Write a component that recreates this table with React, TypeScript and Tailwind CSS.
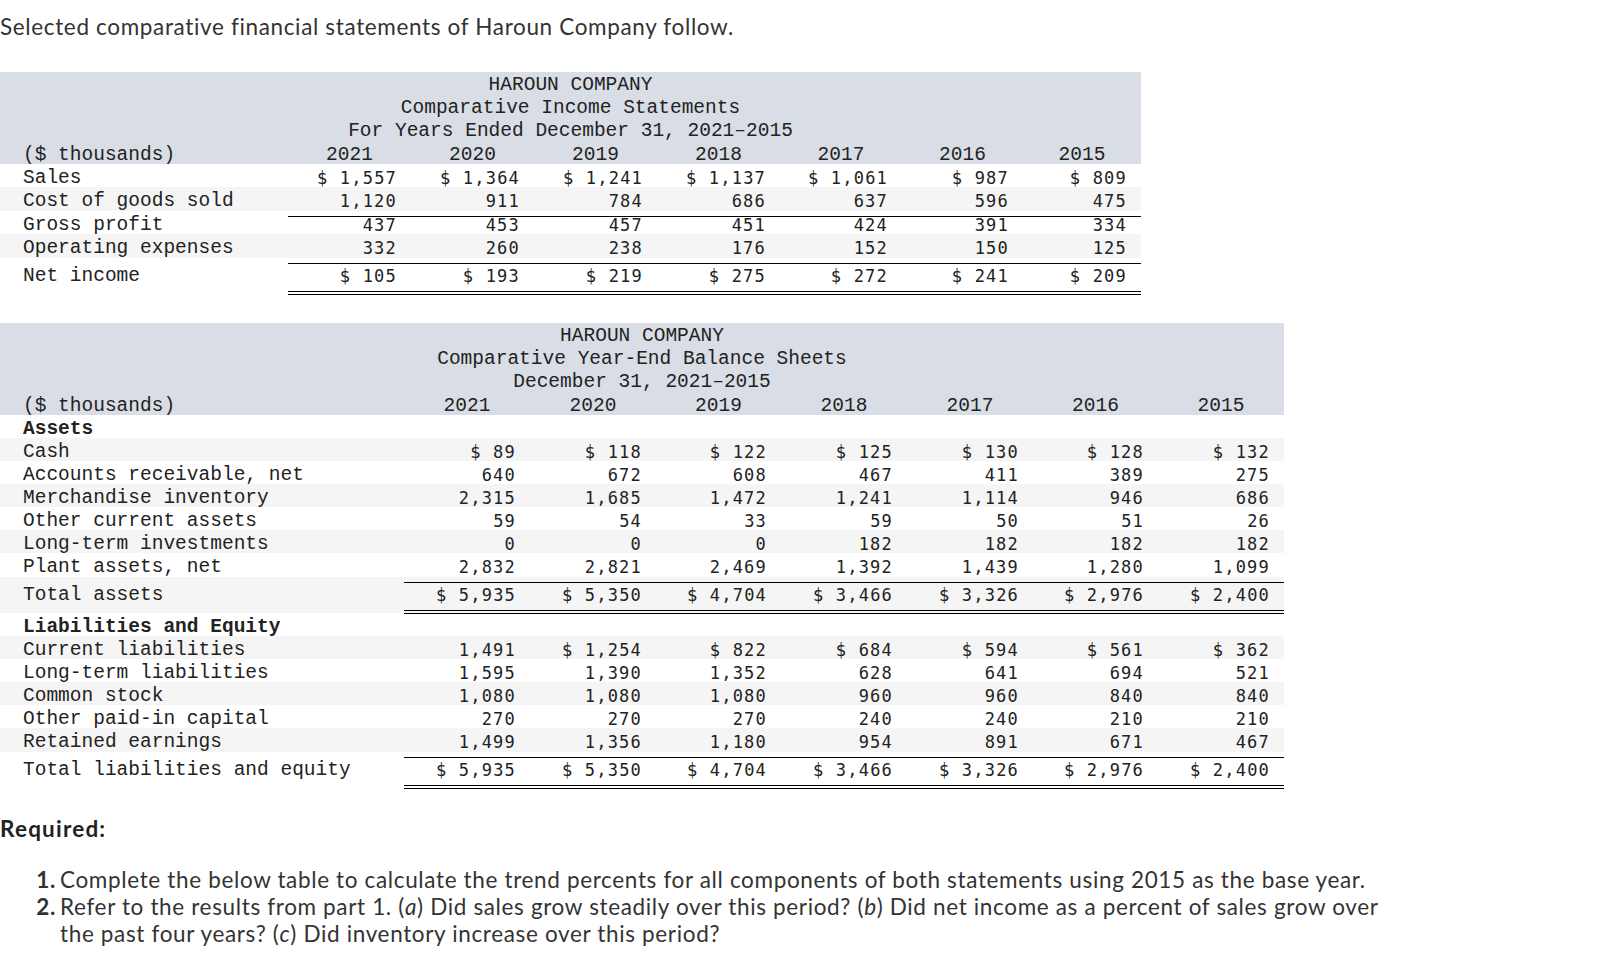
import clsx from "clsx";

const INCOME_GRID =
  "grid grid-cols-[288px_123px_123px_123px_123px_122px_121px_118px]";
const BALANCE_GRID =
  "grid grid-cols-[404px_126px_126px_125px_126px_126px_125px_126px]";

// serif mono where the box has one, Liberation Mono keeps Courier widths otherwise
const labelFont =
  "font-['Courier_New','Nimbus_Mono_PS','FreeMono','Liberation_Mono',monospace] text-[19.5px] text-[#222]";
const numFont =
  "font-['DejaVu_Sans_Mono',monospace] text-[17px] tracking-[1.2px] text-[#222]";

const YEARS = ["2021", "2020", "2019", "2018", "2017", "2016", "2015"];

type Rule = "none" | "single" | "double";

type RowData = {
  label: string;
  values?: string[];
  rule?: Rule;
  bold?: boolean;
};

const incomeRows: RowData[] = [
  { label: "Sales", values: ["$ 1,557", "$ 1,364", "$ 1,241", "$ 1,137", "$ 1,061", "$ 987", "$ 809"] },
  { label: "Cost of goods sold", values: ["1,120", "911", "784", "686", "637", "596", "475"], rule: "single" },
  { label: "Gross profit", values: ["437", "453", "457", "451", "424", "391", "334"] },
  { label: "Operating expenses", values: ["332", "260", "238", "176", "152", "150", "125"], rule: "single" },
  { label: "Net income", values: ["$ 105", "$ 193", "$ 219", "$ 275", "$ 272", "$ 241", "$ 209"], rule: "double" },
];

const balanceRows: RowData[] = [
  { label: "Assets", bold: true },
  { label: "Cash", values: ["$ 89", "$ 118", "$ 122", "$ 125", "$ 130", "$ 128", "$ 132"] },
  { label: "Accounts receivable, net", values: ["640", "672", "608", "467", "411", "389", "275"] },
  { label: "Merchandise inventory", values: ["2,315", "1,685", "1,472", "1,241", "1,114", "946", "686"] },
  { label: "Other current assets", values: ["59", "54", "33", "59", "50", "51", "26"] },
  { label: "Long-term investments", values: ["0", "0", "0", "182", "182", "182", "182"] },
  { label: "Plant assets, net", values: ["2,832", "2,821", "2,469", "1,392", "1,439", "1,280", "1,099"], rule: "single" },
  { label: "Total assets", values: ["$ 5,935", "$ 5,350", "$ 4,704", "$ 3,466", "$ 3,326", "$ 2,976", "$ 2,400"], rule: "double" },
  { label: "Liabilities and Equity", bold: true },
  { label: "Current liabilities", values: ["1,491", "$ 1,254", "$ 822", "$ 684", "$ 594", "$ 561", "$ 362"] },
  { label: "Long-term liabilities", values: ["1,595", "1,390", "1,352", "628", "641", "694", "521"] },
  { label: "Common stock", values: ["1,080", "1,080", "1,080", "960", "960", "840", "840"] },
  { label: "Other paid-in capital", values: ["270", "270", "270", "240", "240", "210", "210"] },
  { label: "Retained earnings", values: ["1,499", "1,356", "1,180", "954", "891", "671", "467"], rule: "single" },
  { label: "Total liabilities and equity", values: ["$ 5,935", "$ 5,350", "$ 4,704", "$ 3,466", "$ 3,326", "$ 2,976", "$ 2,400"], rule: "double" },
];

function Row({ row, grid, striped }: { row: RowData; grid: string; striped: boolean }) {
  const rule = row.rule ?? "none";
  const values = row.values ?? ["", "", "", "", "", "", ""];
  return (
    <div
      className={clsx(
        grid,
        striped ? "bg-[#f5f5f5]" : "bg-white",
        rule === "none" && "h-[23px]",
        rule === "single" && "h-[24px]",
        rule === "double" && "h-[36px]"
      )}
    >
      <div
        className={clsx(
          "flex items-center pl-[23px] whitespace-pre",
          labelFont,
          row.bold && "font-bold",
          rule === "single" && "pb-px",
          rule === "double" && "pt-[4px] pb-[4px]"
        )}
      >
        {row.label}
      </div>
      {values.map((v, i) => (
        <div
          key={i}
          className={clsx(
            "flex items-center justify-end pr-[14px] whitespace-pre",
            numFont,
            rule === "single" && "border-b border-black",
            rule === "double" && "pt-[4px] border-b-4 border-double border-black"
          )}
        >
          {v}
        </div>
      ))}
    </div>
  );
}

function Statement({
  title,
  width,
  grid,
  rows,
}: {
  title: string[];
  width: string;
  grid: string;
  rows: RowData[];
}) {
  return (
    <div className={width}>
      <div className="bg-[#d9dde5]">
        {title.map((t) => (
          <div
            key={t}
            className={clsx("h-[23px] pt-[5px] flex items-center justify-center whitespace-pre", labelFont)}
          >
            {t}
          </div>
        ))}
        <div className={clsx(grid, "h-[23px]")}>
          <div className={clsx("flex items-center pl-[23px]", labelFont)}>($ thousands)</div>
          {YEARS.map((y) => (
            <div key={y} className={clsx("flex items-center justify-center", labelFont)}>
              {y}
            </div>
          ))}
        </div>
      </div>
      {rows.map((r, i) => (
        <Row key={r.label} row={r} grid={grid} striped={i % 2 === 1} />
      ))}
    </div>
  );
}

export default function App() {
  return (
    <div className="w-[1604px] h-[978px] bg-white font-['Lato',sans-serif] text-[#333]">
      <p className="h-[72px] pt-[13px] text-[22.5px] tracking-[0.65px] leading-[28px]">
        Selected comparative financial statements of Haroun Company follow.
      </p>

      <Statement
        title={["HAROUN COMPANY", "Comparative Income Statements", "For Years Ended December 31, 2021\u20132015"]}
        width="w-[1141px]"
        grid={INCOME_GRID}
        rows={incomeRows}
      />

      <div className="h-[29px]" />

      <Statement
        title={["HAROUN COMPANY", "Comparative Year-End Balance Sheets", "December 31, 2021\u20132015"]}
        width="w-[1284px]"
        grid={BALANCE_GRID}
        rows={balanceRows}
      />

      <h2 className="mt-[27px] text-[22.5px] tracking-[1.2px] leading-[27px] font-bold text-[#222]">Required:</h2>

      <ol className="mt-[24px] text-[22.5px] tracking-[0.65px] leading-[27px]">
        <li className="flex">
          <span className="w-[60px] shrink-0 text-right pr-[4px] font-bold">1.</span>
          <span className="whitespace-nowrap">
            Complete the below table to calculate the trend percents for all components of both statements using 2015 as the base year.
          </span>
        </li>
        <li className="flex">
          <span className="w-[60px] shrink-0 text-right pr-[4px] font-bold">2.</span>
          <span>
            <span className="whitespace-nowrap">
              Refer to the results from part 1. (<i>a</i>) Did sales grow steadily over this period? (<i>b</i>) Did net income as a percent of sales grow over
            </span>
            <br />
            the past four years? (<i>c</i>) Did inventory increase over this period?
          </span>
        </li>
      </ol>
    </div>
  );
}
